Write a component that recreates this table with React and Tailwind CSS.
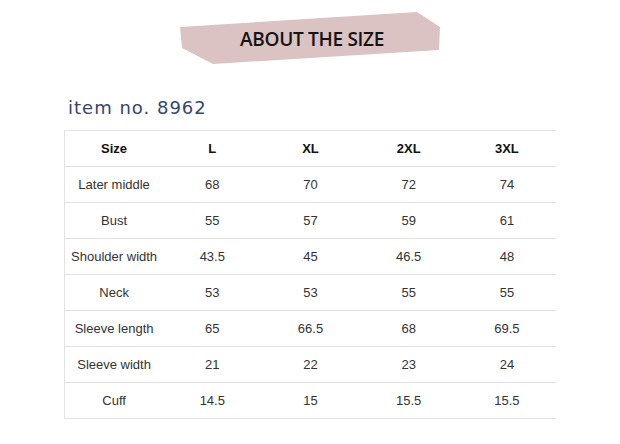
const sizes = ['L', 'XL', '2XL', '3XL'];

const rows = [
  ['Later middle', '68', '70', '72', '74'],
  ['Bust', '55', '57', '59', '61'],
  ['Shoulder width', '43.5', '45', '46.5', '48'],
  ['Neck', '53', '53', '55', '55'],
  ['Sleeve length', '65', '66.5', '68', '69.5'],
  ['Sleeve width', '21', '22', '23', '24'],
  ['Cuff', '14.5', '15', '15.5', '15.5'],
];

function Banner() {
  return (
    <div className="relative ml-[180px] mt-[12px] h-[52px] w-[260px]">
      <svg className="absolute inset-0" width="260" height="52" viewBox="0 0 260 52">
        <polygon points="0,15 237,0 260,15 259,38 33,52 2,36" fill="#dbc2c3" />
      </svg>
      <div className="relative flex h-full items-center justify-center pl-[4px] pt-[3px]">
        <span className="font-['Open_Sans',sans-serif] text-[19px] font-semibold tracking-[-0.3px] text-[#141414]">
          ABOUT THE SIZE
        </span>
      </div>
    </div>
  );
}

export default function App() {
  return (
    <div className="h-[444px] w-[620px] overflow-hidden bg-white">
      <Banner />

      <h2 className="ml-[68px] mt-[34px] font-['DejaVu_Sans',sans-serif] text-[18px] leading-5 tracking-[1px] text-[#34466e]">
        item no. 8962
      </h2>

      <div className="ml-[64px] mt-[12px] w-[492px] border-b border-l border-[#e2e2e2] font-['Liberation_Sans',Arial,sans-serif] text-[13px] text-[#333]">
        <div className="grid h-[36px] grid-cols-5 items-center border-t border-[#e2e2e2] text-center font-bold text-[#111]">
          <div>Size</div>
          {sizes.map((s) => (
            <div key={s}>{s}</div>
          ))}
        </div>
        {rows.map((r) => (
          <div key={r[0]} className="grid h-[36px] grid-cols-5 items-center border-t border-[#e2e2e2] text-center">
            {r.map((c, i) => (
              <div key={i}>{c}</div>
            ))}
          </div>
        ))}
      </div>
    </div>
  );
}
